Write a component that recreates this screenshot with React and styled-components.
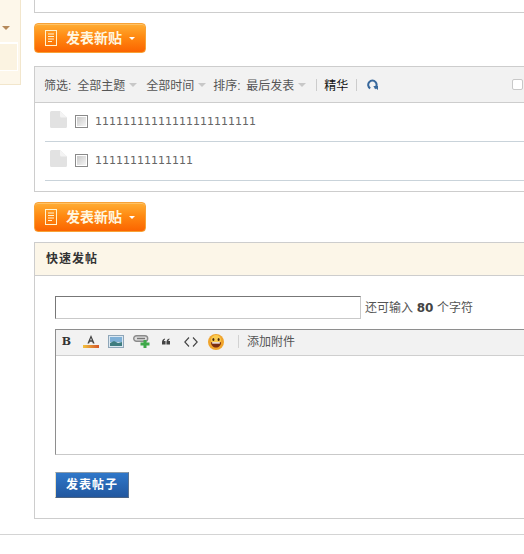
import React from 'react'
import styled, { createGlobalStyle } from 'styled-components'

const Global = createGlobalStyle`
    html, body {
        margin: 0;
        padding: 0;
        background: #fff;
    }
    body {
        font-family: "Liberation Sans", "Noto Sans CJK SC", sans-serif;
        font-size: 12px;
        color: #444;
    }
    * { box-sizing: border-box; }
`;

const Page = styled.div`
    width: 524px;
    height: 554px;
    overflow: hidden;
    display: flex;
    flex-direction: column;
`;
const Columns = styled.div`
    display: flex;
    align-items: flex-start;
    gap: 13px;
`;
const Side = styled.div`
    width: 21px;
    height: 85px;
    flex: none;
    background: #fdf7ea;
    border-right: 1px solid #f2e6cc;
    border-bottom: 1px solid #f2e6cc;
    padding-top: 24px;
`;
const SideArrowRow = styled.div`
    height: 19px;
    display: flex;
    justify-content: flex-end;
    padding: 2px 10px 0 0;
`;
const SideArrow = styled.div`
    width: 0;
    height: 0;
    border-left: 4px solid transparent;
    border-right: 4px solid transparent;
    border-top: 4px solid #b5895a;
`;
const SideItem = styled.div`
    width: 17px;
    height: 27px;
    background: #fbf3e1;
    border-top: 1px solid #fff;
    box-shadow: 0 0 0 1px #fff;
`;
const Main = styled.div`
    width: 520px;
    flex: none;
`;
const TopBox = styled.div`
    height: 13px;
    border-left: 1px solid #cdcdcd;
    border-bottom: 1px solid #cdcdcd;
`;
const PostBtn = styled.div`
    width: 112px;
    height: 30px;
    margin: ${p => p.$top}px 0 ${p => p.$bottom}px;
    border-radius: 4px;
    border: 1px solid #f7a237;
    background: linear-gradient(#ffae35, #ff8a12 45%, #fb6400);
    box-shadow: inset 0 1px 0 #ffc266;
    display: flex;
    align-items: center;
    padding-left: 10px;
    color: #fff7e0;
    font-size: 14px;
    font-weight: bold;
`;
const BtnText = styled.span`
    margin: -2px 0 0 9px;
    font-family: "Noto Sans CJK SC", sans-serif;
    line-height: 28px;
`;
const BtnArrow = styled.span`
    margin-left: 7px;
    border-left: 3px solid transparent;
    border-right: 3px solid transparent;
    border-top: 3px solid #fff;
`;
const ThreadBox = styled.div`
    height: 126px;
    border: 1px solid #cdcdcd;
    border-right: none;
`;
const FilterBar = styled.div`
    height: 36px;
    background: #f2f2f2;
    border-bottom: 1px solid #cdcdcd;
    display: flex;
    align-items: center;
    padding-left: 9px;
    color: #555;
    white-space: nowrap;
    word-spacing: 2.5px;
    position: relative;
`;
const FilterItem = styled.span`
    display: flex;
    align-items: center;
    margin-right: ${p => p.$gap}px;
`;
const GreyArrow = styled.i`
    margin-left: 4px;
    margin-top: 1px;
    border-left: 4px solid transparent;
    border-right: 4px solid transparent;
    border-top: 4px solid #c8c8c8;
`;
const Sep = styled.span`
    width: 1px;
    height: 12px;
    background: #ccc;
    margin: 0 ${p => p.$right}px 0 ${p => p.$left}px;
`;
const Digest = styled.span`
    color: #111;
`;
const OrderCheck = styled.span`
    width: 11px;
    height: 11px;
    border: 1px solid #c8c8c8;
    border-radius: 2px;
    background: #fff;
    position: absolute;
    left: 477px;
    top: 12px;
`;
const Row = styled.div`
    height: ${p => p.$height}px;
    margin-left: 10px;
    border-bottom: 1px solid #c9d3da;
    display: flex;
    align-items: center;
    padding: 0 0 ${p => p.$shift}px 5px;
`;
const FileWrap = styled.span`
    display: flex;
    flex: none;
    margin-bottom: 4px;
`;
const RowCheck = styled.span`
    width: 13px;
    height: 13px;
    margin-left: 8px;
    flex: none;
    border: 1px solid #8a8a8a;
    background: linear-gradient(135deg, #c4c4c4, #fafafa);
    box-shadow: inset 0 0 0 1px #fff;
`;
const RowTitle = styled.span`
    margin: 1px 0 0 7px;
    font-family: "DejaVu Sans", "Noto Sans CJK SC", sans-serif;
    font-size: 11px;
    color: #666;
`;
const QuickBox = styled.div`
    height: 277px;
    border: 1px solid #cdcdcd;
    border-right: none;
`;
const QuickHead = styled.div`
    height: 33px;
    background: #fcf6e8;
    border-bottom: 1px solid #cdcdcd;
    padding: 0 0 3px 11px;
    display: flex;
    align-items: center;
    font-weight: bold;
    letter-spacing: 1px;
    color: #333;
`;
const QuickBody = styled.div`
    padding: 20px 0 0 20px;
`;
const SubjectRow = styled.div`
    display: flex;
    align-items: center;
    height: 23px;
`;
const SubjectInput = styled.input`
    width: 306px;
    height: 23px;
    padding: 0;
    background: #fff;
    border: 1px solid #c9c9c9;
    border-top-color: #777;
    border-left-color: #777;
    outline: none;
`;
const Hint = styled.span`
    margin: -2px 0 0 4px;
    color: #555;
    word-spacing: 0.3px;
    strong {
        font-family: "DejaVu Sans", sans-serif;
        font-size: 12px;
        color: #444;
    }
`;
const Editor = styled.div`
    margin-top: 10px;
    height: 126px;
    border: 1px solid #c9c9c9;
    border-top-color: #8e8e8e;
    border-left-color: #8e8e8e;
    border-right: none;
`;
const Toolbar = styled.div`
    height: 26px;
    background: #f2f2f2;
    border-bottom: 1px solid #cfcfcf;
    display: flex;
    align-items: center;
    padding: 0 0 2px 5px;
`;
const Tool = styled.span`
    width: ${p => p.$w}px;
    height: 18px;
    margin-right: ${p => p.$gap}px;
    flex: none;
    display: flex;
    align-items: center;
    justify-content: center;
`;
const BoldGlyph = styled.span`
    font-family: "DejaVu Serif", serif;
    font-size: 11px;
    font-weight: bold;
    color: #333;
`;
const ToolSep = styled.span`
    width: 1px;
    height: 13px;
    background: #d2d2d2;
    margin: 0 8px 0 2px;
`;
const Attach = styled.span`
    margin-top: -3px;
    color: #555;
`;
const SubmitBtn = styled.div`
    margin-top: 17px;
    width: 74px;
    height: 26px;
    padding-bottom: 4px;
    background: linear-gradient(#2f77c9, #22579f);
    border-top: 1px solid #8b9aa8;
    border-left: 1px solid #e9dfc2;
    border-right: 1px solid #5a7392;
    border-bottom: 1px solid #4a6283;
    color: #fff;
    font-size: 12px;
    font-weight: bold;
    letter-spacing: 1px;
    display: flex;
    align-items: center;
    justify-content: center;
`;
const BottomLine = styled.div`
    margin-top: 15px;
    height: 1px;
    background: #d4d4d4;
`;

const NoteIcon = () => (
    <svg width="12" height="16" viewBox="0 0 12 16" fill="none" stroke="#fff3d0" strokeWidth="1">
        <rect x="0.5" y="0.5" width="11" height="15" />
        <path d="M3 4h6M3 6.5h6M3 9h6M3 11.5h4" />
    </svg>
);

const FileIcon = () => (
    <svg width="17" height="17" viewBox="0 0 17 17">
        <path d="M1.5 0H10l7 6.5V15.5a1.5 1.5 0 0 1-1.5 1.5h-14A1.5 1.5 0 0 1 0 15.5v-14A1.5 1.5 0 0 1 1.5 0z" fill="#e2e2e2" />
        <path d="M10 0l7 6.5h-5.500a1.500 1.500 0 0 1-1.500-1.500z" fill="#f4f4f4" />
    </svg>
);

const RefreshIcon = () => (
    <svg width="11" height="11" viewBox="0 0 11 11" fill="none">
        <path d="M3.2 9.4A4.2 4.2 0 1 1 7.6 9.4" stroke="#38689c" strokeWidth="2" />
        <path d="M6 7h5v4z" fill="#38689c" />
    </svg>
);

const ColorIcon = () => (
    <svg width="16" height="13" viewBox="0 0 16 13">
        <path d="M8 0L4.4 8.500h1.700l.7-1.800h2.400l.7 1.800h1.700L8 0zm-.8 5.200L8 3l.8 2.200z" fill="#444" />
        <defs>
            <linearGradient id="colorBar" x1="0" y1="0" x2="1" y2="0">
                <stop offset="0" stopColor="#f2c23e" />
                <stop offset="1" stopColor="#d4572a" />
            </linearGradient>
        </defs>
        <rect y="10" width="16" height="3" fill="url(#colorBar)" />
    </svg>
);

const ImageIcon = () => (
    <svg width="16" height="13" viewBox="0 0 16 13">
        <rect x="0.5" y="0.5" width="15" height="12" fill="#dbe8f2" stroke="#8fa6b8" />
        <rect x="2" y="2" width="12" height="5" fill="#7fb0d6" />
        <path d="M2 8l4-2 4 2 4-1v4H2z" fill="#3f7d80" />
    </svg>
);

const LinkIcon = () => (
    <svg width="17" height="13" viewBox="0 0 17 13">
        <rect x="0.7" y="0.7" width="14" height="5.6" rx="2.8" fill="#ddd" stroke="#8b8b8b" strokeWidth="1.4" />
        <path d="M4 3.500h8" stroke="#777" strokeWidth="1.400" />
        <path d="M10.500 5h3v2.500h3v3h-3v2.500h-3v-2.500h-3v-3h3z" fill="#3fa84a" />
    </svg>
);

const QuoteIcon = () => (
    <svg width="8" height="7" viewBox="0 0 9 7" fill="#444">
        <path d="M0 4.200C0 2 1.200.6 3.400 0v1.300C2.600 1.700 2.200 2.200 2.200 3H4v4H0zM5 4.200C5 2 6.200.6 8.400 0v1.300C7.600 1.700 7.200 2.200 7.200 3H9v4H5z" />
    </svg>
);

const CodeIcon = () => (
    <svg width="14" height="10" viewBox="0 0 14 10" fill="none" stroke="#444" strokeWidth="1.1">
        <path d="M5 .5L.8 5 5 9.500M9 .5L13.200 5 9 9.500" />
    </svg>
);

const SmileIcon = () => (
    <svg width="16" height="16" viewBox="0 0 16 16">
        <circle cx="8" cy="8" r="8" fill="#f0a42c" />
        <circle cx="8" cy="6" r="5" fill="#fbcb50" />
        <ellipse cx="5.400" cy="5.600" rx="1" ry="1.500" fill="#4a2a10" />
        <ellipse cx="10.600" cy="5.600" rx="1" ry="1.500" fill="#4a2a10" />
        <path d="M3 8.200h10c0 3.200-2.200 5.300-5 5.300s-5-2.100-5-5.300z" fill="#7b2d10" />
        <path d="M4.200 8.200h7.600v1.400H4.200z" fill="#fff" />
    </svg>
);

const NewPostButton = ({ top, bottom }) => (
    <PostBtn $top={top} $bottom={bottom}>
        <NoteIcon />
        <BtnText>发表新贴</BtnText>
        <BtnArrow />
    </PostBtn>
);

const threads = [
    { title: '11111111111111111111111', height: 39, shift: 2 },
    { title: '11111111111111', height: 39, shift: 2 },
];

export default function App() {
    return (
        <Page>
            <Global />
            <Columns>
                <Side>
                    <SideArrowRow><SideArrow /></SideArrowRow>
                    <SideItem />
                </Side>
                <Main>
                    <TopBox />
                    <NewPostButton top={10} bottom={13} />
                    <ThreadBox>
                        <FilterBar>
                            <FilterItem $gap={9}>筛选: 全部主题<GreyArrow /></FilterItem>
                            <FilterItem $gap={7}>全部时间<GreyArrow /></FilterItem>
                            <FilterItem $gap={0}>排序: 最后发表<GreyArrow /></FilterItem>
                            <Sep $left={10} $right={7} />
                            <Digest>精华</Digest>
                            <Sep $left={8} $right={10} />
                            <RefreshIcon />
                            <OrderCheck />
                        </FilterBar>
                        {threads.map((t, i) => (
                            <Row key={i} $height={t.height} $shift={t.shift}>
                                <FileWrap><FileIcon /></FileWrap>
                                <RowCheck />
                                <RowTitle>{t.title}</RowTitle>
                            </Row>
                        ))}
                    </ThreadBox>
                    <NewPostButton top={10} bottom={10} />
                    <QuickBox>
                        <QuickHead>快速发帖</QuickHead>
                        <QuickBody>
                            <SubjectRow>
                                <SubjectInput />
                                <Hint>还可输入 <strong>80</strong> 个字符</Hint>
                            </SubjectRow>
                            <Editor>
                                <Toolbar>
                                    <Tool $w={11} $gap={11}><BoldGlyph>B</BoldGlyph></Tool>
                                    <Tool $w={16} $gap={9}><ColorIcon /></Tool>
                                    <Tool $w={16} $gap={9}><ImageIcon /></Tool>
                                    <Tool $w={17} $gap={11}><LinkIcon /></Tool>
                                    <Tool $w={9} $gap={14}><QuoteIcon /></Tool>
                                    <Tool $w={14} $gap={10}><CodeIcon /></Tool>
                                    <Tool $w={16} $gap={12}><SmileIcon /></Tool>
                                    <ToolSep />
                                    <Attach>添加附件</Attach>
                                </Toolbar>
                            </Editor>
                            <SubmitBtn>发表帖子</SubmitBtn>
                        </QuickBody>
                    </QuickBox>
                </Main>
            </Columns>
            <BottomLine />
        </Page>
    )
}
